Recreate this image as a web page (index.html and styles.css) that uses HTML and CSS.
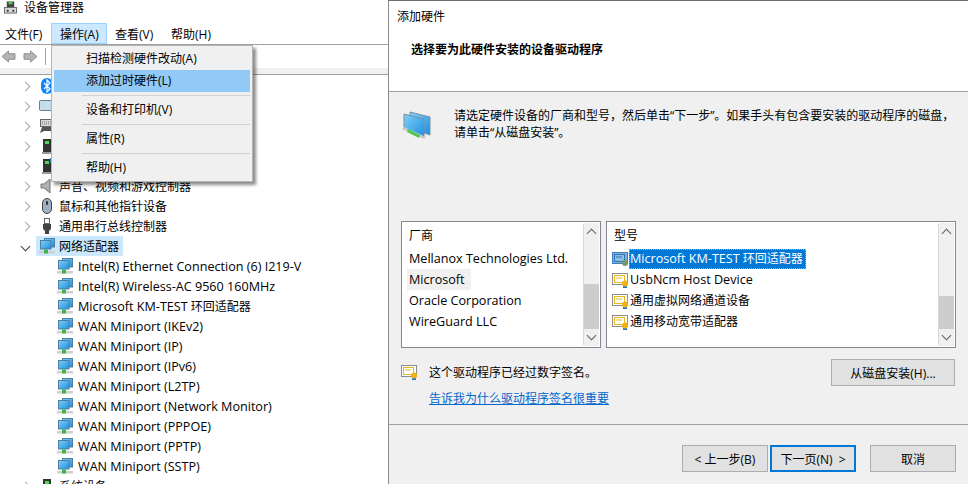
FILE: index.html
```html
<!DOCTYPE html>
<html lang="zh-CN">
<head>
  <meta charset="UTF-8" />
  <title>设备管理器 - 添加硬件</title>
  <link rel="stylesheet" href="styles.css">
</head>
<body>
  <svg class="sprites" xmlns="http://www.w3.org/2000/svg">
    <defs>
      <linearGradient id="screen" x1="0" y1="0" x2="1" y2="1">
        <stop offset="0" stop-color="#7fd0f7"/>
        <stop offset="1" stop-color="#1f8fe0"/>
      </linearGradient>
    </defs>
    <symbol id="net" viewBox="0 0 16 16">
      <rect x="5.5" y="0.5" width="10" height="8.5" fill="url(#screen)" stroke="#4f7fa0"/>
      <rect x="1.5" y="2.5" width="10.5" height="8.5" fill="url(#screen)" stroke="#4f7fa0"/>
      <rect x="0" y="13" width="16" height="2.5" fill="#cfcfcf"/>
      <rect x="5" y="11.5" width="4" height="4" fill="#3fb34f"/>
    </symbol>
    <symbol id="cert" viewBox="0 0 16 16">
      <rect x="0.5" y="1.5" width="15" height="11" fill="#fff" stroke="#8c8c8c"/>
      <rect x="2.5" y="3.5" width="10" height="7" fill="#fff" stroke="#e8b820"/>
      <rect x="4" y="5.5" width="6" height="1" fill="#e8b820"/>
      <rect x="11" y="12" width="4" height="4" fill="#2a78c8"/>
      <circle cx="13" cy="11.5" r="3" fill="#f2b312"/>
    </symbol>
    <symbol id="cert-sel" viewBox="0 0 16 16">
      <rect x="0.5" y="1.5" width="15" height="11" fill="#7fb0dc" stroke="#3f7fb8"/>
      <rect x="2.5" y="3.5" width="10" height="7" fill="#8fbce2" stroke="#2f78b8"/>
      <rect x="4" y="5.5" width="6" height="1" fill="#2f78b8"/>
      <circle cx="13" cy="12" r="3" fill="#6f9a70"/>
    </symbol>
    <symbol id="tower" viewBox="0 0 16 16">
      <rect x="4" y="1" width="8" height="13" fill="#333"/>
      <rect x="6" y="3" width="4" height="3" fill="#4fd84f"/>
      <rect x="3" y="14" width="10" height="2" fill="#999"/>
    </symbol>
  </svg>

  <div class="screen">
    <section class="manager">
      <div class="title-row">
        <svg class="title-icon" viewBox="0 0 14 13">
          <rect x="3" y="0" width="8" height="6" fill="#444"/>
          <rect x="5" y="0" width="4" height="3" fill="#5cc75c"/>
          <rect x="0.5" y="6.5" width="13" height="6" fill="#d8d8d8" stroke="#666"/>
          <rect x="3" y="9" width="2" height="2" fill="#333"/>
          <rect x="9" y="9" width="2" height="2" fill="#333"/>
        </svg>
        <span>设备管理器</span>
      </div>
      <div class="menubar">
        <span class="menu-top">文件(F)</span>
        <span class="menu-top open">操作(A)</span>
        <span class="menu-top">查看(V)</span>
        <span class="menu-top">帮助(H)</span>
      </div>
      <div class="toolbar">
        <svg class="tool-arrow" viewBox="0 0 16 14"><path d="M1 7 8 1v3h7v6H8v3z" fill="#b4b4b4" stroke="#8a8a8a"/></svg>
        <svg class="tool-arrow" viewBox="0 0 16 14"><path d="M15 7 8 1v3H1v6h7v3z" fill="#b4b4b4" stroke="#8a8a8a"/></svg>
        <span class="tool-sep"></span>
      </div>
      <div class="toolbar-band"></div>

      <ul class="tree">
        <li class="node"><i class="chev"></i>
          <svg class="ico" viewBox="0 0 16 16"><rect x="2" y="0" width="12" height="16" rx="6" fill="#0a84ff"/><path d="M5 5l6 6-3 3V2l3 3-6 6" fill="none" stroke="#fff" stroke-width="1.2"/></svg></li>
        <li class="node"><i class="chev"></i>
          <svg class="ico" viewBox="0 0 16 16"><rect x="0.5" y="2.5" width="15" height="10" rx="1" fill="#c5dcec" stroke="#6b7f8c"/></svg></li>
        <li class="node"><i class="chev"></i>
          <svg class="ico" viewBox="0 0 16 16"><rect x="1.5" y="1.5" width="13" height="7" fill="#d8d8d8" stroke="#666"/><path d="M3 4h10M3 6h10" stroke="#777" stroke-dasharray="1 1"/><path d="M1 15l2-6h10l2 6-4-2H5z" fill="#555"/></svg></li>
        <li class="node"><i class="chev"></i><svg class="ico"><use href="#tower"/></svg></li>
        <li class="node"><i class="chev"></i>
          <svg class="ico" viewBox="0 0 16 16"><use href="#tower"/><rect x="11" y="0" width="4" height="5" fill="#2a78c8"/></svg></li>
        <li class="node"><i class="chev"></i>
          <svg class="ico" viewBox="0 0 16 16"><path d="M2 6h3l6-5v14l-6-5H2z" fill="#b0b0b0" stroke="#777"/></svg>
          <span>声音、视频和游戏控制器</span></li>
        <li class="node"><i class="chev"></i>
          <svg class="ico" viewBox="0 0 16 16"><rect x="3.5" y="0.5" width="9" height="15" rx="4.5" fill="#9fb0c4" stroke="#444"/><rect x="7" y="3" width="2" height="4" rx="1" fill="#333"/></svg>
          <span>鼠标和其他指针设备</span></li>
        <li class="node"><i class="chev"></i>
          <svg class="ico" viewBox="0 0 16 16"><rect x="5.5" y="0.5" width="5" height="5" fill="#fff" stroke="#666"/><path d="M4 6h8v5l-2 2v3H6v-3l-2-2z" fill="#444"/></svg>
          <span>通用串行总线控制器</span></li>
        <li class="node expanded"><i class="chev down"></i>
          <span class="node-label"><svg class="ico"><use href="#net"/></svg><span>网络适配器</span></span></li>
        <li class="leaf"><svg class="ico"><use href="#net"/></svg><span class="en">Intel(R) Ethernet Connection (6) I219-V</span></li>
        <li class="leaf"><svg class="ico"><use href="#net"/></svg><span class="en">Intel(R) Wireless-AC 9560 160MHz</span></li>
        <li class="leaf"><svg class="ico"><use href="#net"/></svg><span><span class="en">Microsoft KM-TEST</span> 环回适配器</span></li>
        <li class="leaf"><svg class="ico"><use href="#net"/></svg><span class="en">WAN Miniport (IKEv2)</span></li>
        <li class="leaf"><svg class="ico"><use href="#net"/></svg><span class="en">WAN Miniport (IP)</span></li>
        <li class="leaf"><svg class="ico"><use href="#net"/></svg><span class="en">WAN Miniport (IPv6)</span></li>
        <li class="leaf"><svg class="ico"><use href="#net"/></svg><span class="en">WAN Miniport (L2TP)</span></li>
        <li class="leaf"><svg class="ico"><use href="#net"/></svg><span class="en">WAN Miniport (Network Monitor)</span></li>
        <li class="leaf"><svg class="ico"><use href="#net"/></svg><span class="en">WAN Miniport (PPPOE)</span></li>
        <li class="leaf"><svg class="ico"><use href="#net"/></svg><span class="en">WAN Miniport (PPTP)</span></li>
        <li class="leaf"><svg class="ico"><use href="#net"/></svg><span class="en">WAN Miniport (SSTP)</span></li>
        <li class="node"><i class="chev"></i><svg class="ico"><use href="#tower"/></svg><span>系统设备</span></li>
      </ul>

      <div class="popup">
        <div class="popup-item">扫描检测硬件改动(A)</div>
        <div class="popup-item active">添加过时硬件(L)</div>
        <div class="popup-sep"></div>
        <div class="popup-item">设备和打印机(V)</div>
        <div class="popup-sep"></div>
        <div class="popup-item">属性(R)</div>
        <div class="popup-sep"></div>
        <div class="popup-item">帮助(H)</div>
      </div>
    </section>

    <section class="dialog">
      <div class="dialog-head">
        <div class="dialog-title">添加硬件</div>
        <div class="dialog-heading">选择要为此硬件安装的设备驱动程序</div>
      </div>
      <div class="dialog-body">
        <div class="intro">
          <svg class="intro-icon" viewBox="0 0 40 40">
            <path d="M12 8l20 5v18l-20-7z" fill="url(#screen)" stroke="#7d8f9c"/>
            <path d="M6 10l20 5v18L6 25z" fill="url(#screen)" stroke="#7d8f9c"/>
            <path d="M4 25l22 10 2-2-22-10z" fill="#c8c8c8"/>
            <path d="M10 25l12 6-1 3-12-6z" fill="#55c455"/>
          </svg>
          <p>请选定硬件设备的厂商和型号，然后单击“下一步”。如果手头有包含要安装的驱动程序的磁盘，<br>请单击“从磁盘安装”。</p>
        </div>

        <div class="lists">
          <div class="listbox vendor">
            <div class="list-content">
              <div class="list-head">厂商</div>
              <div class="list-row en">Mellanox Technologies Ltd.</div>
              <div class="list-row en"><span class="hover">Microsoft</span></div>
              <div class="list-row en">Oracle Corporation</div>
              <div class="list-row en">WireGuard LLC</div>
            </div>
            <div class="scrollbar">
              <span class="sb-arrow up"></span>
              <span class="sb-track"><span class="sb-thumb vendor-thumb"></span></span>
              <span class="sb-arrow dn"></span>
            </div>
          </div>
          <div class="listbox model">
            <div class="list-content">
              <div class="list-head">型号</div>
              <div class="list-row"><svg class="cert-ico"><use href="#cert-sel"/></svg><span class="selected"><span class="en">Microsoft KM-TEST</span> 环回适配器</span></div>
              <div class="list-row"><svg class="cert-ico"><use href="#cert"/></svg><span class="model-name en">UsbNcm Host Device</span></div>
              <div class="list-row"><svg class="cert-ico"><use href="#cert"/></svg><span class="model-name zh">通用虚拟网络通道设备</span></div>
              <div class="list-row"><svg class="cert-ico"><use href="#cert"/></svg><span class="model-name zh">通用移动宽带适配器</span></div>
            </div>
            <div class="scrollbar">
              <span class="sb-arrow up"></span>
              <span class="sb-track"><span class="sb-thumb model-thumb"></span></span>
              <span class="sb-arrow dn"></span>
            </div>
          </div>
        </div>

        <div class="signed">
          <div class="signed-info">
            <div class="signed-line"><svg class="cert-ico"><use href="#cert"/></svg><span>这个驱动程序已经过数字签名。</span></div>
            <a class="signed-link" href="#">告诉我为什么驱动程序签名很重要</a>
          </div>
          <button class="btn disk-btn" type="button">从磁盘安装(H)...</button>
        </div>

        <div class="footer">
          <button class="btn" type="button">&lt; 上一步(B)</button>
          <button class="btn primary" type="button">下一页(N) &nbsp;&gt;</button>
          <button class="btn cancel" type="button">取消</button>
        </div>
      </div>
    </section>
  </div>
</body>
</html>
```

FILE: styles.css
```css
:root {
  --font: "Open Sans", "Noto Sans CJK SC", sans-serif;
  --panel: #f0f0f0;
  --rule: #a0a0a0;
  --hi: #cce8ff;
}

html, body {
  margin: 0;
  padding: 0;
  width: 968px;
  height: 484px;
  overflow: hidden;
  background: #fff;
  font-family: var(--font);
  font-size: 12px;
  color: #000;
}

.sprites {
  position: absolute;
  width: 0;
  height: 0;
}

.screen {
  display: flex;
  height: 484px;
}

.en { font-size: 12.6px; }

/* left window */
.manager {
  position: relative;
  width: 388px;
  flex: none;
  overflow: hidden;
}

.title-row {
  display: flex;
  align-items: center;
  gap: 7px;
  height: 14px;
  padding-left: 4px;
}

.title-icon {
  width: 13px;
  height: 13px;
}

.menubar {
  display: flex;
  height: 31px;
  padding: 9px 0 0;
  box-sizing: border-box;
  border-bottom: 1px solid var(--rule);
}

.menu-top {
  height: 21px;
  line-height: 21px;
  padding: 0 0 0 4px;
  box-sizing: border-box;
  border: 1px solid transparent;
}

.menu-top:nth-child(1) { width: 51px; }

.menu-top.open {
  width: 56px;
  padding-left: 8px;
  background: var(--hi);
  border-color: #99d1ff;
}

.menu-top:nth-child(3) { width: 56px; padding-left: 7px; }
.menu-top:nth-child(4) { padding-left: 7px; }

.toolbar {
  display: flex;
  align-items: center;
  gap: 7px;
  height: 23px;
  padding-left: 1px;
}

.tool-arrow {
  width: 15px;
  height: 13px;
}

.tool-sep {
  width: 1px;
  height: 17px;
  background: #a0a0a0;
}

.toolbar-band {
  height: 6px;
  background: var(--panel);
  border-bottom: 1px solid var(--rule);
}

.tree {
  list-style: none;
  margin: 1px 0 0;
  padding: 0;
}

.node, .leaf {
  display: flex;
  align-items: center;
  height: 20px;
  white-space: nowrap;
}

.node { padding-left: 22px; }
.leaf { padding-left: 57px; gap: 5px; }

.node > span, .node-label > span { margin-left: 4px; }

.chev {
  width: 7px;
  height: 7px;
  flex: none;
  margin-right: 10px;
  box-sizing: border-box;
  border-top: 1.5px solid #a6a6a6;
  border-right: 1.5px solid #a6a6a6;
  transform: rotate(45deg);
}

.chev.down {
  border-color: #404040;
  transform: rotate(135deg);
}

.ico {
  width: 16px;
  height: 16px;
  flex: none;
}

.node > .node-label {
  display: flex;
  align-items: center;
  height: 20px;
  width: 87px;
  margin-left: -3px;
  padding-left: 3px;
  box-sizing: border-box;
  background: var(--hi);
}

/* action menu */
.popup {
  position: absolute;
  left: 51px;
  top: 45px;
  width: 202px;
  height: 137px;
  box-sizing: border-box;
  padding: 2px 2px;
  background: var(--panel);
  border: 1px solid #b4b4b4;
  box-shadow: 3px 3px 3px rgba(0, 0, 0, 0.45);
}

.popup-item {
  height: 22px;
  line-height: 21px;
  padding-left: 32px;
}

.popup-item.active { background: #91c9f7; }

.popup-sep {
  height: 1px;
  margin: 3px 0 3px 28px;
  background: #d0d0d0;
}

/* add hardware wizard */
.dialog {
  flex: 1;
  min-width: 0;
  display: flex;
  flex-direction: column;
  border-left: 1px solid #8c8c8c;
  border-top: 1px solid #6e6e6e;
}

.dialog-head {
  height: 91px;
  box-sizing: border-box;
  padding: 8px 0 0 8px;
  background: #fff;
  border-bottom: 1px solid var(--rule);
}

.dialog-title { line-height: 16px; }

.dialog-heading {
  margin: 17px 0 0 14px;
  font-weight: 700;
  line-height: 16px;
}

.dialog-body {
  flex: 1;
  background: var(--panel);
}

.intro {
  display: flex;
  height: 129px;
  padding: 12px 0 0 9px;
  box-sizing: border-box;
}

.intro-icon {
  width: 40px;
  height: 40px;
  flex: none;
}

.intro p {
  margin: 3px 0 0 16px;
  line-height: 17px;
  white-space: nowrap;
}

.lists {
  display: flex;
  gap: 5px;
  padding-left: 12px;
}

.listbox {
  display: flex;
  height: 127px;
  box-sizing: border-box;
  background: #fff;
  border: 1px solid #828790;
}

.vendor { width: 200px; }
.model { width: 350px; }

.list-content {
  flex: 1;
  padding: 5px 0 0 6px;
}

.model .list-content { padding-left: 5px; }

.list-head {
  height: 21px;
  line-height: 17px;
  padding-left: 1px;
}

.model .list-head { padding-left: 2px; }

.list-row {
  display: flex;
  align-items: center;
  height: 21px;
  white-space: nowrap;
}

.vendor .list-row { padding-left: 1px; }

.hover {
  display: block;
  width: 64px;
  margin-left: -2px;
  padding-left: 2px;
  box-sizing: border-box;
  line-height: 21px;
  background: var(--panel);
}

.cert-ico {
  width: 16px;
  height: 16px;
  flex: none;
}

.model-name { margin-left: 2px; }
.model-name.zh { margin-bottom: 2px; }

.selected {
  margin-left: 1px;
  padding: 0 3px 0 1px;
  line-height: 20px;
  color: #fff;
  background: #0078d7;
  outline: 1px dotted #f0a040;
  outline-offset: -1px;
}

.scrollbar {
  display: flex;
  flex-direction: column;
  width: 15px;
  margin: 1px 1px 1px 0;
  background: var(--panel);
  box-shadow: -2px 0 0 -1px #d8d8d8;
}

.sb-arrow {
  height: 17px;
  flex: none;
  position: relative;
}

.sb-arrow::after {
  content: "";
  position: absolute;
  left: 4px;
  width: 7px;
  height: 7px;
  box-sizing: border-box;
  border-top: 1.5px solid #606060;
  border-left: 1.5px solid #606060;
}

.sb-arrow.up::after { top: 7px; transform: rotate(45deg); }
.sb-arrow.dn::after { top: 3px; transform: rotate(225deg); }

.sb-track {
  flex: 1;
  display: flex;
  flex-direction: column;
  justify-content: flex-end;
}

.sb-thumb {
  display: block;
  background: #cdcdcd;
}

.vendor-thumb { height: 45px; }
.model-thumb { height: 33px; }

.signed {
  display: flex;
  justify-content: space-between;
  padding: 10px 13px 0 12px;
  height: 77px;
  box-sizing: border-box;
  border-bottom: 1px solid var(--rule);
}

.signed-line {
  display: flex;
  align-items: center;
  gap: 12px;
  height: 27px;
}

.signed-link {
  display: block;
  margin: 6px 0 0 28px;
  color: #0066cc;
  line-height: 16px;
}

.btn {
  height: 27px;
  width: 86px;
  padding: 0;
  font: inherit;
  color: #000;
  background: #e1e1e1;
  border: 1px solid #adadad;
}

.disk-btn {
  width: 124px;
  margin-top: 1px;
}

.btn.primary {
  border: 2px solid #0078d7;
  margin-left: 2px;
}

.btn.cancel { margin-left: 14px; }

.footer {
  display: flex;
  padding: 20px 12px 0 0;
  justify-content: flex-end;
}
```
